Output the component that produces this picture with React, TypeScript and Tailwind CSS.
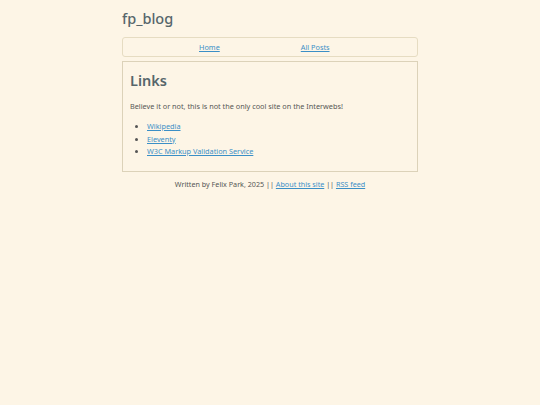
export default function App() {
  return (
    <div className="min-h-[405px] bg-[#fdf5e6] text-[#555] font-['Noto_Sans','Liberation_Sans',sans-serif]">
      <div className="w-[296px] mx-auto">
        {/* Header */}
        <header className="h-[37px] flex items-center">
          <span className="text-[14.5px] font-medium text-[#56666b] leading-none -mt-[1px]">fp_blog</span>
        </header>

        {/* Nav */}
        <nav className="h-[20px] border border-[#e6dcc2] rounded-[3px] flex items-center pl-[76px] gap-[81px] text-[7.3px]">
          <a href="#" className="text-[#3b8fc6] underline">Home</a>
          <a href="#" className="text-[#3b8fc6] underline">All Posts</a>
        </nav>

        {/* Content */}
        <main className="mt-[4px] h-[111px] border border-[#dcd2b9] px-[7px]">
          <h1 className="mt-[7px] text-[14.5px] font-semibold text-[#56666b] leading-[22px]">Links</h1>
          <p className="mt-[10px] text-[7.3px] leading-[10px]">
            Believe it or not, this is not the only cool site on the Interwebs!
          </p>
          <ul className="mt-[9px] ml-[17px] list-disc text-[7.3px] leading-[12.5px] marker:text-[#555]">
            <li><a href="#" className="text-[#3b8fc6] underline">Wikipedia</a></li>
            <li><a href="#" className="text-[#3b8fc6] underline">Eleventy</a></li>
            <li><a href="#" className="text-[#3b8fc6] underline">W3C Markup Validation Service</a></li>
          </ul>
        </main>

        {/* Footer */}
        <footer className="mt-[7px] text-center text-[7.2px] leading-[10px]">
          Written by Felix Park, 2025 || <a href="#" className="text-[#3b8fc6] underline">About this site</a> ||{' '}
          <a href="#" className="text-[#3b8fc6] underline">RSS feed</a>
        </footer>
      </div>
    </div>
  );
}
